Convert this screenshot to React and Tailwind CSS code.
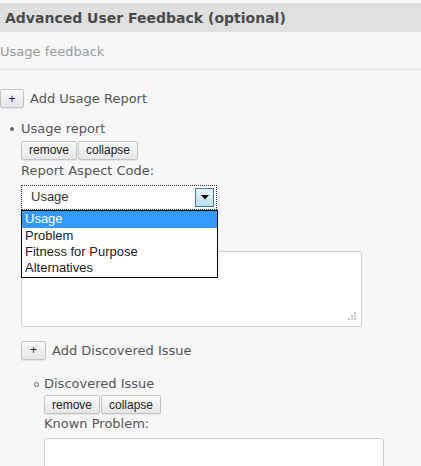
import React from "react";

const btn =
  "h-[19px] px-[8px] border border-[#c4c4c4] rounded-[2px] bg-gradient-to-b from-[#fafafa] to-[#e6e6e6] text-[12px] text-[#222] leading-none flex items-center shadow-[0_1px_1px_rgba(0,0,0,0.08)]";
const arial = { fontFamily: '"Liberation Sans", Arial, sans-serif' };

function Grip() {
  return (
    <svg className="absolute right-[5px] bottom-[5px]" width="10" height="10" viewBox="0 0 10 10">
      {[[8, 0], [5, 3], [8, 3], [2, 6], [5, 6], [8, 6]].map(([x, y], i) => (
        <rect key={i} x={x} y={y + 1} width="2" height="2" fill="#c8c8c8" />
      ))}
    </svg>
  );
}

function ButtonsRow() {
  return (
    <div className="flex gap-[1px]" style={arial}>
      <button className={btn + " w-[56px] justify-center"}>remove</button>
      <button className={btn + " w-[60px] justify-center"}>collapse</button>
    </div>
  );
}

export default function App() {
  return (
    <div
      className="min-h-screen bg-[#f7f7f7] pt-[3px] text-[#555]"
      style={{ fontFamily: '"DejaVu Sans", Verdana, sans-serif' }}
    >
      <div className="h-[29px] bg-[#e0e0e0] px-[5px] pt-[1px] flex items-center text-[14px] font-bold text-[#4a4a4a]">
        Advanced User Feedback (optional)
      </div>
      <div className="h-[38px] pt-[3px] flex items-center border-b border-[#e3e3e3] text-[13px] text-[#9a9a9a] pl-0">
        Usage feedback
      </div>

      <div className="mt-[19px] flex items-center gap-[6px]">
        <button
          className={btn + " w-[24px] h-[18px] justify-center text-[11px]"}
          style={arial}
        >
          +
        </button>
        <span className="text-[13px]">Add Usage Report</span>
      </div>

      <div className="mt-[11px] pl-[21px] relative">
        <div className="flex items-center h-[18px] relative">
          <span className="absolute left-[-11px] w-[4px] h-[4px] rounded-full bg-[#666]" />
          <span className="text-[13px]">Usage report</span>
        </div>
        <div className="mt-[3px]">
          <ButtonsRow />
        </div>
        <div className="mt-[2px] h-[18px] flex items-center text-[13px]">Report Aspect Code:</div>

        <div className="relative mt-[5px] w-[196px]">
          <div className="h-[25px] border border-dotted border-[#333] bg-white flex items-center pl-[9px] text-[13px] text-[#333]">
            <span style={arial}>Usage</span>
            <div className="absolute right-[3px] top-[3px] w-[19px] h-[19px] border border-[#3d7bad] bg-gradient-to-b from-[#eaf4fc] to-[#bcdcf4] flex items-center justify-center">
              <svg width="8" height="5" viewBox="0 0 8 5">
                <path d="M0 0h8L4 4.5z" fill="#000" />
              </svg>
            </div>
          </div>
          <div
            className="absolute left-0 top-[25px] w-[197px] border border-[#000] bg-white z-10 text-[13px] text-[#222] leading-[16px]"
            style={arial}
          >
            <div className="bg-[#3399ff] text-white pl-[3px] h-[17px] flex items-center">Usage</div>
            <div className="pl-[3px]">Problem</div>
            <div className="pl-[3px]">Fitness for Purpose</div>
            <div className="pl-[3px] pb-[1px]">Alternatives</div>
          </div>
        </div>

        <div className="mt-[41px] relative w-[341px] h-[76px] border border-[#cfcfcf] rounded-[3px] bg-white">
          <Grip />
        </div>

        <div className="mt-[14px] flex items-center gap-[6px]">
          <button
            className={btn + " w-[25px] h-[18px] justify-center text-[11px]"}
            style={arial}
          >
            +
          </button>
          <span className="text-[13px]">Add Discovered Issue</span>
        </div>

        <div className="mt-[15px] pl-[23px]">
          <div className="flex items-center h-[18px] relative">
            <span className="absolute left-[-10px] w-[5px] h-[5px] rounded-full border border-[#666]" />
            <span className="text-[13px]">Discovered Issue</span>
          </div>
          <div className="mt-[2px]">
            <ButtonsRow />
          </div>
          <div className="mt-[1px] h-[18px] flex items-center text-[13px]">Known Problem:</div>
          <div className="mt-[5px] w-[340px] h-[60px] border border-[#cfcfcf] rounded-[3px] bg-white" />
        </div>
      </div>
    </div>
  );
}
